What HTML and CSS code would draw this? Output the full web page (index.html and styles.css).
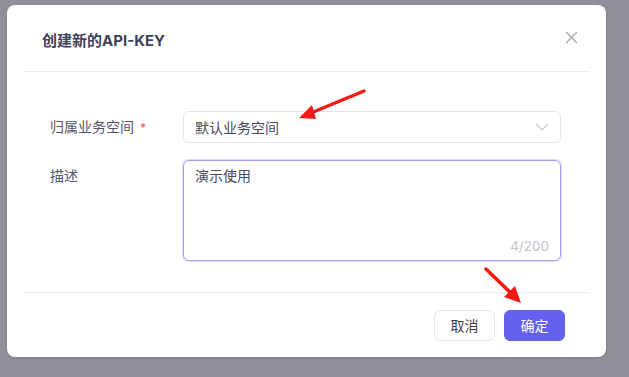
FILE: index.html
```html
<!DOCTYPE html>
<html>
<head>
	<title>创建新的API-KEY</title>
	<meta charset="utf-8">
	<link rel="stylesheet" href="styles.css">
</head>
<body>
<div class="dialog">
	<!-- 标题 -->
	<div class="head">
		<h2>创建新的API-KEY</h2>
		<svg class="close" width="13" height="13" viewBox="0 0 13 13"><path d="M1 1L12 12M12 1L1 12" stroke="#a6a6b0" stroke-width="1.3" fill="none"/></svg>
	</div>
	<div class="line"></div>

	<!-- 表单 -->
	<div class="form">
		<div class="row">
			<label>归属业务空间<i>*</i></label>
			<div class="select">
				<span>默认业务空间</span>
				<svg width="14" height="8" viewBox="0 0 14 8"><path d="M1 1L7 7L13 1" stroke="#c4c4cc" stroke-width="1.2" fill="none"/></svg>
			</div>
		</div>
		<div class="row">
			<label>描述</label>
			<div class="area">
				<span>演示使用</span>
				<em>4/200</em>
			</div>
		</div>
	</div>
	<div class="line"></div>

	<!-- 按钮 -->
	<div class="foot">
		<a class="btn" href="javascript:;">取消</a>
		<a class="btn primary" href="javascript:;">确定</a>
	</div>
</div>

<!-- 标注箭头 -->
<svg class="marks" width="629" height="377" viewBox="0 0 629 377">
	<g stroke="#f21a12" stroke-width="3.5" stroke-linecap="round" fill="none">
		<path d="M364 91L306 115"/>
		<path d="M486 269L516 298"/>
	</g>
	<g fill="#f21a12">
		<path d="M299 118L312 105L316 119Z"/>
		<path d="M521 303L504 297L515 286Z"/>
	</g>
</svg>
</body>
</html>
```

FILE: styles.css
```css
body, h2 { margin: 0; padding: 0; }
a { text-decoration: none; }

body { background-color: #919099; font-family: "Inter", "Noto Sans CJK SC", sans-serif; color: #3d3c50; font-size: 14px; height: 377px; overflow: hidden; }

.dialog { margin: 5px 0 0 7px; width: 599px; height: 352px; background-color: #fff; border-radius: 8px; box-shadow: 0 1px 3px rgba(0,0,0,.15); }
.head { height: 66px; padding: 0 28px 0 35px; display: flex; align-items: center; justify-content: space-between; }
.head h2 { font-size: 15px; font-weight: 700; color: #403f5a; padding-top: 3px; }
.close { margin-top: -2px; }
.line { height: 1px; margin: 0 16px; background-color: #ececf2; }

.form { padding: 39px 45px 31px 43px; display: flex; flex-direction: column; gap: 16px; }
.row { display: flex; align-items: flex-start; }
.row label { width: 133px; flex: none; color: #55546a; line-height: 32px; }
.row label i { color: #f25a5a; font-style: normal; margin-left: 6px; font-size: 12px; }
.select { flex: 1; height: 30px; border: 1px solid #e4e4ec; border-radius: 6px; display: flex; align-items: center; justify-content: space-between; padding: 0 11px; color: #4a495e; }
.area { flex: 1; height: 99px; border: 1px solid #a29ff5; border-radius: 6px; padding: 0 11px; display: flex; flex-direction: column; justify-content: space-between; box-shadow: 0 0 0 1px rgba(162,159,245,.35); }
.area span { line-height: 30px; color: #4a495e; }
.area em { font-style: normal; color: #c2c2cc; align-self: flex-end; line-height: 28px; font-size: 13.5px; }

.foot { display: flex; justify-content: flex-end; gap: 9px; padding: 17px 41px 0 0; }
.btn { width: 59px; height: 29px; line-height: 29px; text-align: center; border: 1px solid #e4e4ec; border-radius: 6px; color: #3d3c50; }
.primary { background-color: #6461ee; border-color: #6461ee; color: #fff; }

.marks { position: absolute; left: 0; top: 0; }
```
